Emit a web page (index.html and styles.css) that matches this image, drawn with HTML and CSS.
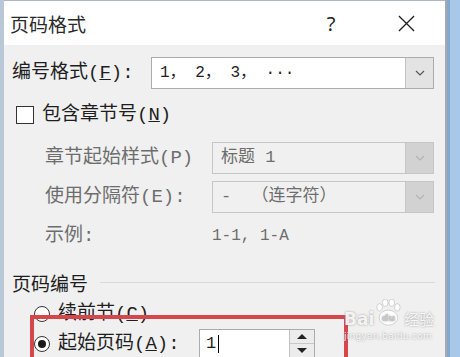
FILE: index.html
```html
<!DOCTYPE html>
<html lang="zh-CN">
<head>
  <meta charset="UTF-8" />
  <title>页码格式</title>
  <link rel="stylesheet" href="styles.css">
</head>
<body>

  <div class="window">
    <div class="titlebar">
      <span class="title">页码格式</span>
      <span class="help">?</span>
      <svg class="close" viewBox="0 0 18 18">
        <path d="M1 1L17 17M17 1L1 17"/>
      </svg>
    </div>

    <div class="content">
      <div class="row row-format">
        <span class="label">编号格式(<u>F</u>):</span>
        <div class="combo">
          <span class="value">1， 2， 3， ···</span>
          <span class="drop">
            <svg viewBox="0 0 10 6"><polyline points="1,1 5,5 9,1"/></svg>
          </span>
        </div>
      </div>

      <div class="row row-check">
        <span class="checkbox"></span>
        <span>包含章节号(<u>N</u>)</span>
      </div>

      <div class="row row-sub disabled">
        <span class="label">章节起始样式(P)</span>
        <div class="combo dis">
          <span class="value">标题 1</span>
          <span class="drop">
            <svg viewBox="0 0 10 6"><polyline points="1,1 5,5 9,1"/></svg>
          </span>
        </div>
      </div>

      <div class="row row-sub row-sep disabled">
        <span class="label">使用分隔符(E):</span>
        <div class="combo dis">
          <span class="value">-&nbsp;&nbsp;（连字符）</span>
          <span class="drop">
            <svg viewBox="0 0 10 6"><polyline points="1,1 5,5 9,1"/></svg>
          </span>
        </div>
      </div>

      <div class="row row-sample disabled">
        <span class="label">示例:</span>
        <span class="sample">1-1, 1-A</span>
      </div>

      <div class="group">
        <span>页码编号</span>
        <span class="rule"></span>
      </div>

      <div class="row row-radio">
        <span class="radio"></span>
        <span>续前节(<u>C</u>)</span>
      </div>

      <div class="highlight">
        <div class="row row-radio row-start">
          <span class="radio checked"></span>
          <span class="label">起始页码(<u>A</u>):</span>
          <div class="spin">
            <span class="spin-value">1<span class="caret"></span></span>
            <span class="spin-btns">
              <span class="up"></span>
              <span class="down"></span>
            </span>
          </div>
        </div>
      </div>
    </div>

    <div class="watermark">
      <div class="wm-top">
        <span class="wm-bai">Bai</span>
        <svg class="paw" viewBox="0 0 30 30">
          <ellipse cx="6" cy="9" rx="3" ry="4"/>
          <ellipse cx="12" cy="4" rx="3" ry="4"/>
          <ellipse cx="19" cy="4" rx="3" ry="4"/>
          <ellipse cx="25" cy="9" rx="3" ry="4"/>
          <ellipse cx="15.5" cy="20" rx="10" ry="8"/>
          <text x="15.5" y="24" text-anchor="middle">du</text>
        </svg>
        <span class="wm-jy">经验</span>
      </div>
      <div class="wm-url">jingyan.baidu.com</div>
    </div>
  </div>

</body>
</html>
```

FILE: styles.css
```css
html, body {
  margin: 0;
  padding: 0;
}

body {
  width: 460px;
  height: 357px;
  overflow: hidden;
  background: linear-gradient(to right, #f0f0f0 447px, #7fa8d4 447px, #7fa8d4 450px, #a9c7e6 450px);
  font-family: "Liberation Mono", "Noto Sans CJK SC", monospace;
  color: #1e1e1e;
}

.window {
  width: 441px;
  height: 357px;
  border-left: 4px solid #b9c8d7;
  border-right: 2px solid #a9a9a9;
  background: #f0f0f0;
  position: relative;
  overflow: hidden;
}

.titlebar {
  height: 44px;
  background: #fff;
  border-top: 1px solid #aab7c4;
  display: flex;
  align-items: center;
}

.title {
  flex: 1;
  padding-left: 6px;
  font-family: "Noto Sans CJK SC", sans-serif;
  font-size: 19px;
  color: #2a2a2a;
}

.help {
  width: 24px;
  text-align: center;
  margin-right: 55px;
  font-family: "Noto Sans", sans-serif;
  font-size: 20px;
  color: #222;
}

.close {
  width: 17px;
  height: 17px;
  margin-right: 30px;
  fill: none;
  stroke: #222;
  stroke-width: 1.4;
}

.content {
  padding: 0 11px 0 8px;
}

.row {
  display: flex;
  align-items: center;
  font-size: 19px;
  line-height: 24px;
}

.row-format {
  margin-top: 10px;
  height: 36px;
}

.row-format .label {
  width: 139px;
}

.combo {
  flex: 1;
  height: 32px;
  box-sizing: border-box;
  border: 1px solid #acacac;
  background: #fff;
  display: flex;
}

.combo .value {
  flex: 1;
  padding-left: 8px;
  font-size: 16px;
  line-height: 30px;
  white-space: nowrap;
}

.combo .drop {
  width: 27px;
  border-left: 1px solid #c2c2c2;
  background: #e3e3e3;
  display: flex;
  align-items: center;
  justify-content: center;
}

.drop svg {
  width: 10px;
  height: 6px;
  fill: none;
  stroke: #555;
  stroke-width: 1.2;
}

.combo.dis {
  background: #f0f0f0;
  border-color: #c6c6c6;
}

.combo.dis .value {
  font-size: 17px;
}

.combo.dis .drop {
  background: #d2d2d2;
  border-left-color: #c6c6c6;
}

.combo.dis .drop svg {
  stroke: #b4b4b4;
}

.disabled {
  color: #6d6d6d;
}

.row-check {
  margin-top: 9px;
  height: 30px;
  padding-left: 4px;
}

.checkbox {
  width: 18px;
  height: 18px;
  box-sizing: border-box;
  border: 1px solid #333;
  background: #fff;
  margin-right: 8px;
}

.row-sub {
  margin-top: 11px;
  height: 34px;
  padding-left: 33px;
}

.row-sub .label {
  width: 167px;
}

.row-sep {
  margin-top: 5px;
}

.row-sample {
  margin-top: 10px;
  height: 24px;
  padding-left: 33px;
}

.row-sample .label {
  width: 167px;
}

.sample {
  font-size: 16px;
}

.group {
  margin-top: 20px;
  height: 28px;
  display: flex;
  align-items: center;
  font-family: "Noto Sans CJK SC", sans-serif;
  font-size: 19px;
}

.group .rule {
  flex: 1;
  height: 1px;
  background: #d9d9d9;
  margin-left: 12px;
  margin-right: -1px;
}

.row-radio {
  margin-top: 8px;
  height: 20px;
  padding-left: 22px;
}

.radio {
  width: 16px;
  height: 16px;
  box-sizing: border-box;
  border: 1px solid #333;
  border-radius: 50%;
  background: #fff;
  margin-right: 8px;
  display: flex;
  align-items: center;
  justify-content: center;
}

.radio.checked::after {
  content: "";
  width: 8px;
  height: 8px;
  border-radius: 50%;
  background: #1a1a1a;
}

.highlight {
  position: relative;
  margin-top: -9px;
  margin-left: 18px;
  width: 310px;
  height: 50px;
  border: 4px solid #d6474b;
  border-bottom: none;
}

.row-start {
  margin-top: 10px;
  height: 30px;
  padding-left: 0;
}

.row-start .label {
  width: 141px;
}

.spin {
  width: 116px;
  height: 30px;
  box-sizing: border-box;
  border: 1px solid #acacac;
  background: #fff;
  display: flex;
}

.spin-value {
  flex: 1;
  padding-left: 6px;
  font-size: 17px;
  line-height: 28px;
  display: flex;
  align-items: center;
}

.caret {
  width: 1px;
  height: 18px;
  background: #000;
  margin-left: 2px;
}

.spin-btns {
  width: 24px;
  border-left: 1px solid #c2c2c2;
  display: flex;
  flex-direction: column;
}

.spin-btns span {
  flex: 1;
  display: flex;
  align-items: center;
  justify-content: center;
  background: #ececec;
  border-bottom: 1px solid #c8c8c8;
}

.spin-btns .up::after {
  content: "";
  border-left: 5px solid transparent;
  border-right: 5px solid transparent;
  border-bottom: 5px solid #222;
}

.spin-btns .down::after {
  content: "";
  border-left: 5px solid transparent;
  border-right: 5px solid transparent;
  border-top: 5px solid #222;
}

.watermark {
  position: absolute;
  left: 340px;
  top: 298px;
  width: 92px;
  color: rgba(255, 255, 255, 0.9);
  text-shadow: 0 0 2px rgba(120, 120, 120, 0.8);
  font-family: "DejaVu Sans", "Noto Sans CJK SC", sans-serif;
}

.wm-top {
  display: flex;
  align-items: flex-end;
  height: 32px;
}

.wm-bai {
  font-size: 17px;
  font-weight: bold;
  line-height: 22px;
}

.paw {
  width: 28px;
  height: 28px;
  margin-bottom: 3px;
  fill: rgba(255, 255, 255, 0.9);
  stroke: rgba(150, 150, 150, 0.7);
  stroke-width: 0.6;
}

.paw text {
  fill: #c9c9c9;
  stroke: none;
  font-size: 10px;
  font-weight: bold;
  font-family: "DejaVu Sans", sans-serif;
}

.wm-jy {
  font-family: "Noto Sans CJK SC", sans-serif;
  font-size: 15px;
  line-height: 22px;
  margin-left: 2px;
}

.wm-url {
  font-size: 9px;
  line-height: 12px;
  letter-spacing: 0.3px;
}
```
